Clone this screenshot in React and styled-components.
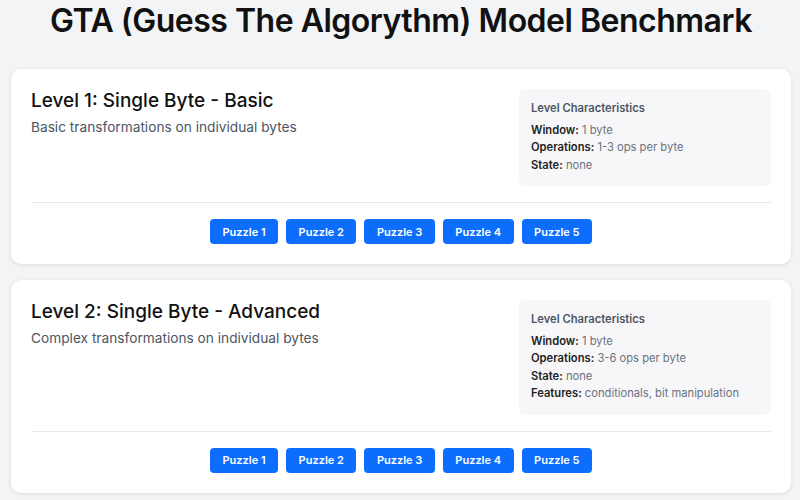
import styled, { createGlobalStyle } from "styled-components";

const levels = [
  {
    title: "Level 1: Single Byte - Basic",
    description: "Basic transformations on individual bytes",
    traits: [
      ["Window", "1 byte"],
      ["Operations", "1-3 ops per byte"],
      ["State", "none"],
    ],
  },
  {
    title: "Level 2: Single Byte - Advanced",
    description: "Complex transformations on individual bytes",
    traits: [
      ["Window", "1 byte"],
      ["Operations", "3-6 ops per byte"],
      ["State", "none"],
      ["Features", "conditionals, bit manipulation"],
    ],
  },
];

const GlobalStyle = createGlobalStyle`
  body {
    margin: 0;
    background: #f3f4f6;
    font-family: Inter, "Noto Sans", sans-serif;
    color: #111827;
  }
`;

const Page = styled.div`
  padding: 0 9px 10px 11px;
`;

const Heading = styled.h1`
  margin: 0;
  padding: 3px 0 0;
  height: 69px;
  box-sizing: border-box;
  text-align: center;
  font-size: 32px;
  line-height: 36px;
  font-weight: 600;
  letter-spacing: -0.5px;
  color: #111;
`;

const Card = styled.section`
  background: #fff;
  border-radius: 10px;
  box-shadow: 0 1px 4px rgba(0, 0, 0, 0.1);
  padding: 20px;
  margin-bottom: 16px;
`;

const Top = styled.div`
  display: flex;
  justify-content: space-between;
  align-items: flex-start;
  padding-bottom: 16px;
  border-bottom: 1px solid #e8e9ec;
`;

const Title = styled.h2`
  margin: 0 0 7px;
  font-size: 19px;
  line-height: 23px;
  font-weight: 500;
  color: #111;
`;

const Description = styled.p`
  margin: 0;
  font-size: 13.7px;
  color: #4b5563;
`;

const Traits = styled.div`
  width: 252px;
  box-sizing: border-box;
  background: #f7f7f9;
  border-radius: 6px;
  padding: 11px 12px 12px;
  font-size: 11.2px;
  line-height: 17.5px;
`;

const TraitsHeading = styled.div`
  font-weight: 600;
  color: #4b5563;
  margin-bottom: 4px;
`;

const Trait = styled.div`
  color: #6b7280;

  b {
    font-weight: 600;
    color: #222;
  }
`;

const Buttons = styled.div`
  display: flex;
  justify-content: center;
  gap: 8px;
  padding-top: 16px;
`;

const PuzzleButton = styled.button`
  height: 25px;
  padding: 0 12.5px;
  border: none;
  border-radius: 4px;
  background: #0d6efd;
  color: #fff;
  font-family: Inter, "Noto Sans", sans-serif;
  font-size: 11px;
  font-weight: 600;
  cursor: pointer;
`;

export default function App() {
  return (
    <Page>
      <GlobalStyle />
      <Heading>GTA (Guess The Algorythm) Model Benchmark</Heading>
      {levels.map((level) => (
        <Card key={level.title}>
          <Top>
            <div>
              <Title>{level.title}</Title>
              <Description>{level.description}</Description>
            </div>
            <Traits>
              <TraitsHeading>Level Characteristics</TraitsHeading>
              {level.traits.map(([label, value]) => (
                <Trait key={label}>
                  <b>{label}:</b> {value}
                </Trait>
              ))}
            </Traits>
          </Top>
          <Buttons>
            {[1, 2, 3, 4, 5].map((n) => (
              <PuzzleButton key={n}>Puzzle {n}</PuzzleButton>
            ))}
          </Buttons>
        </Card>
      ))}
    </Page>
  );
}
